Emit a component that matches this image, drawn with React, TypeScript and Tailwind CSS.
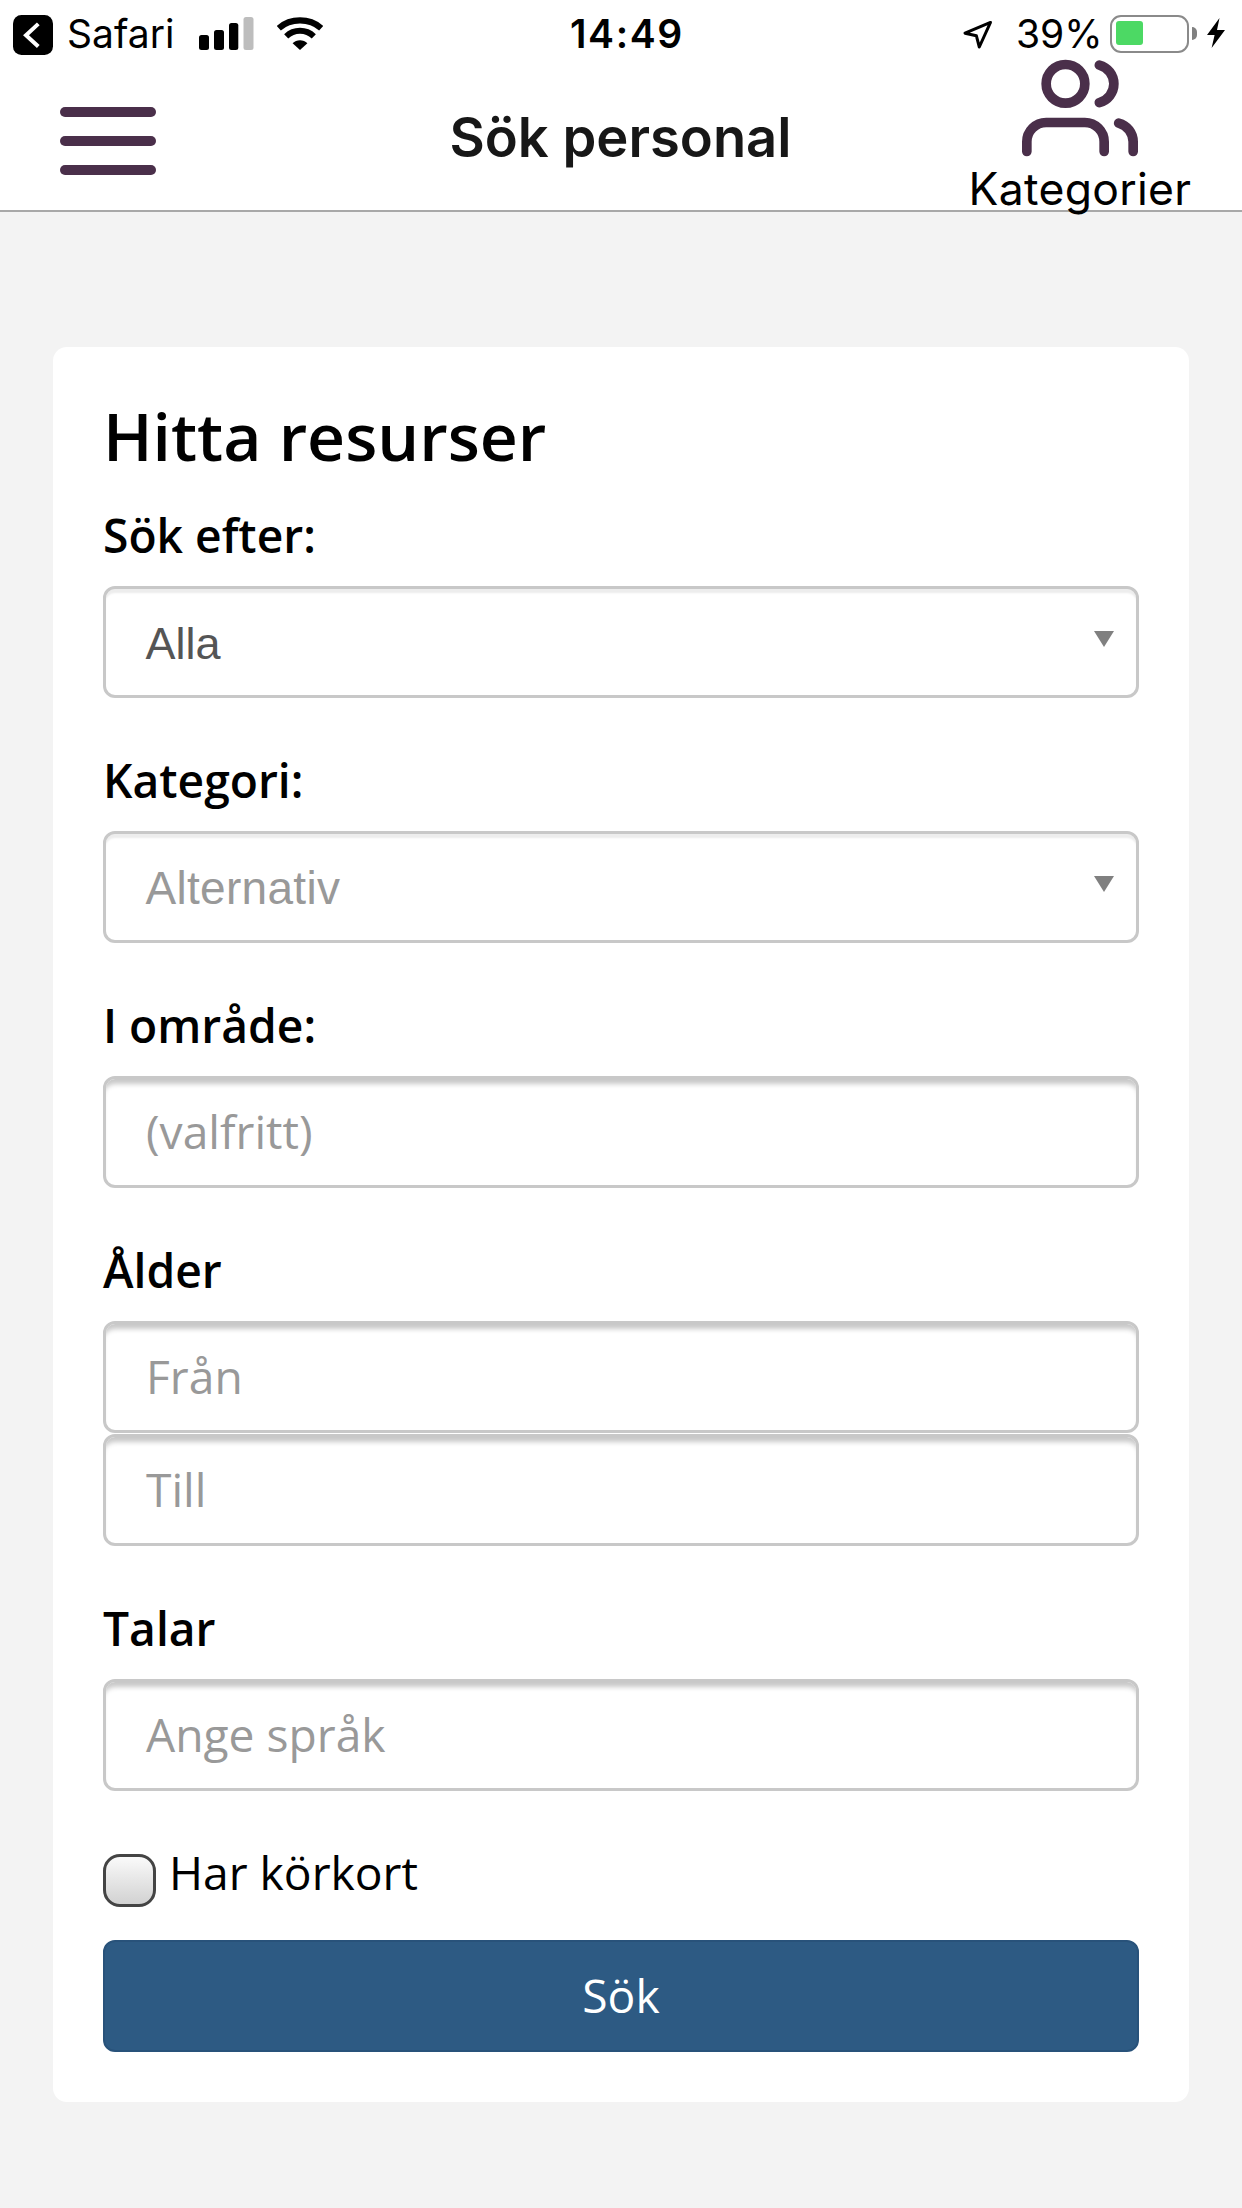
import React, { type ReactNode } from "react";

function BackToApp() {
  return (
    <svg className="mt-[0.5px] h-10 w-10 shrink-0" viewBox="0 0 40 40" fill="none">
      <rect width="40" height="40" rx="8.5" fill="#000" />
      <path d="M25.3 8.9 13 20.2l12.3 11.3" stroke="#fff" strokeWidth="4" />
    </svg>
  );
}

function Signal() {
  return (
    <svg className="mt-[3px] ml-[24px] h-[33px] w-[55px] shrink-0" viewBox="0 0 55 33">
      <rect x="0" y="18" width="10" height="15" rx="2.5" />
      <rect x="15" y="13" width="10" height="20" rx="2.5" />
      <rect x="30" y="6" width="9.3" height="27" rx="2.5" />
      <rect x="44.5" y="0" width="10" height="33" rx="2.5" fill="#bdbdbd" />
    </svg>
  );
}

function Wifi() {
  return (
    <svg className="mt-[3px] ml-[23px] h-[33px] w-[46px] shrink-0" viewBox="0 0 46 33" fill="none" stroke="#000">
      <path d="M1.8 11.2C13.5 .8 32.5 .8 44.2 11.2" strokeWidth="6.2" />
      <path d="M9.2 19.4C17 12 29 12 36.8 19.4" strokeWidth="6" />
      <path d="M23 33 15.6 26.2C19.5 22.2 26.5 22.2 30.4 26.2Z" fill="#000" stroke="none" />
    </svg>
  );
}

function StatusBar() {
  return (
    <div className="flex h-14 items-start pt-3.5 pl-[13px] font-['Inter',sans-serif] text-[39px] leading-10 text-black">
      <div className="flex w-[557px] items-start">
        <BackToApp />
        <span className="ml-[14px] w-[108px]">Safari</span>
        <Signal />
        <Wifi />
      </div>
      <span className="w-[392px] font-semibold tracking-[1.6px]">14:49</span>
      <svg className="mt-[5px] h-[32px] w-[32px] shrink-0" viewBox="0 0 32 32" fill="none">
        <path d="M28.5 3.4 3 14.2 14.4 16.8 17.3 28Z" stroke="#000" strokeWidth="3" strokeLinejoin="round" />
      </svg>
      <span className="ml-[22px] w-[94px]">39%</span>
      <div className="mt-px h-[38px] w-[79px] shrink-0 rounded-[11px] border-[2.5px] border-[#8a8a8a] p-[4px]">
        <div className="h-6 w-[27px] rounded-[3px] bg-[#4cd964]" />
      </div>
      <div className="mt-[13px] ml-[3px] h-[13px] w-[5px] rounded-r-full bg-[#808080]" />
      <svg className="mt-1 ml-[10px] h-[30px] w-[18px] shrink-0" viewBox="0 0 18 30">
        <path d="M12.5 0 0 17h7.6L4.6 30 18 12h-8Z" />
      </svg>
    </div>
  );
}

function NavBar() {
  return (
    <div className="flex h-[154px] items-start pl-[60px]">
      <button className="mt-[50.5px] flex w-[389.5px] flex-col gap-[19px]" aria-label="Meny">
        <span className="h-[10px] w-24 rounded-full bg-[#4a2f4a]" />
        <span className="h-[10px] w-24 rounded-full bg-[#4a2f4a]" />
        <span className="h-[10px] w-24 rounded-full bg-[#4a2f4a]" />
      </button>
      <h1 className="mt-[49px] w-[519px] font-['Inter',sans-serif] text-[54.3px] leading-[64px] font-semibold whitespace-nowrap text-[#171717]">
        Sök personal
      </h1>
      <button className="flex w-[226px] flex-col items-start">
        <svg
          className="-mt-[6px] ml-[53px] h-[116px] w-[116px]"
          viewBox="0 0 24 24"
          fill="none"
          stroke="#4a2f4a"
          strokeWidth="2"
          strokeLinecap="round"
          strokeLinejoin="round"
        >
          <path d="M17 21v-2a4 4 0 0 0-4-4H5a4 4 0 0 0-4 4v2" />
          <circle cx="9" cy="7" r="4" />
          <path d="M23 21v-2a4 4 0 0 0-3-3.87" />
          <path d="M16 3.13a4 4 0 0 1 0 7.75" />
        </svg>
        <span className="-mt-[3px] font-['Inter',sans-serif] text-[44.5px] leading-[52px] tracking-[0.3px] text-black">
          Kategorier
        </span>
      </button>
    </div>
  );
}

function Label({ children }: { children: ReactNode }) {
  return <div className="mb-[18px] h-[66px] pt-[2px] text-[46.2px] leading-[64px] font-semibold">{children}</div>;
}

function Select({ value, muted = false }: { value: string; muted?: boolean }) {
  return (
    <div className="flex h-28 items-center justify-between rounded-[12px] border-[3px] border-[#c8c8c8] pr-[22px] pl-[39.5px] shadow-[inset_0_5px_2px_-1px_#ededed]">
      <span
        className={
          "font-['Liberation_Sans',sans-serif] leading-[64px] " +
          (muted ? "pt-px text-[46px] tracking-[0.3px] text-[#999]" : "pt-[3px] text-[45px] text-[#555]")
        }
      >
        {value}
      </span>
      <svg className="mb-[6px] h-4 w-5" viewBox="0 0 20 16">
        <path d="M0 0h20L10 16Z" fill="#808080" />
      </svg>
    </div>
  );
}

function Field({ placeholder }: { placeholder: string }) {
  return (
    <div className="flex h-28 items-center rounded-[12px] border-[3px] border-[#c8c8c8] pl-10 shadow-[inset_0_8px_5px_-3px_#c8c8c8]">
      <span className="pb-px text-[46.2px] leading-[64px] text-[#999]">{placeholder}</span>
    </div>
  );
}

export default function App() {
  return (
    <div className="h-[2208px] w-[1242px] overflow-hidden bg-[#f3f3f3] font-['Open_Sans',sans-serif] text-black">
      <header className="h-[212px] border-b-2 border-[#a8a8a8] bg-white">
        <StatusBar />
        <NavBar />
      </header>

      <main className="mx-[53px] mt-[135px] h-[1755px] rounded-[14px] bg-white px-[50px] pt-[42px]">
        <h2 className="mb-[23px] h-[90px] text-[66px] leading-[92px] font-semibold">Hitta resurser</h2>
        <div className="flex flex-col gap-[49px]">
          <div>
            <Label>Sök efter:</Label>
            <Select value="Alla" />
          </div>
          <div>
            <Label>Kategori:</Label>
            <Select value="Alternativ" muted />
          </div>
          <div>
            <Label>I område:</Label>
            <Field placeholder="(valfritt)" />
          </div>
          <div>
            <Label>Ålder</Label>
            <Field placeholder="Från" />
            <div className="mt-px">
              <Field placeholder="Till" />
            </div>
          </div>
          <div>
            <Label>Talar</Label>
            <Field placeholder="Ange språk" />
          </div>
          <div className="flex h-16 items-start gap-[13px]">
            <span className="mt-3.5 h-[53px] w-[53px] shrink-0 rounded-[17px] border-[3px] border-[#444] bg-linear-to-b from-[#fafafa] to-[#d2d2d2]" />
            <span className="text-[46.2px] leading-[65px]">Har körkort</span>
          </div>
        </div>
        <button className="mt-9 flex h-28 w-full items-center justify-center rounded-[12px] border-2 border-[#28527a] bg-[#2d5a83] text-[46.2px] leading-[64px] text-white">
          Sök
        </button>
      </main>
    </div>
  );
}
